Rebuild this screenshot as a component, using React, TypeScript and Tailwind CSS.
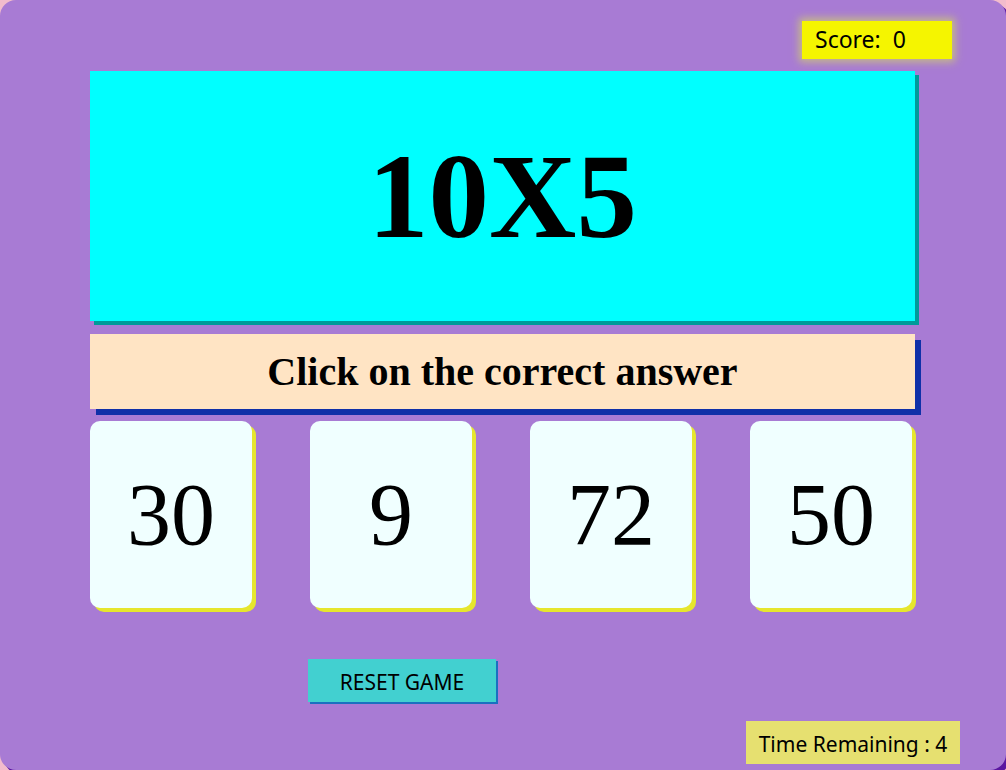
import React from "react";

const answers = ["30", "9", "72", "50"];

const AnswerCard: React.FC<{ value: string }> = ({ value }) => (
  <div className="w-[162px] h-[187px] bg-[#f0ffff] rounded-[10px] shadow-[4px_4px_0_#e6e62e] flex items-center justify-center">
    <span className="text-[88px] leading-none text-black" style={{ fontFamily: '"Liberation Serif", serif' }}>
      {value}
    </span>
  </div>
);

export default function App() {
  return (
    <div className="h-[770px] w-[1006px] bg-[#f2bccc] overflow-hidden">
      <div
        className="h-full w-full bg-[#a87bd4] rounded-[16px] shadow-[4px_4px_0_#5a16a0] flex flex-col"
        style={{ fontFamily: '"Noto Sans", "Open Sans", sans-serif' }}
      >
        {/* score */}
        <div className="flex justify-end pr-[54px] pt-[21px]">
          <div className="w-[150px] h-[38px] bg-[#f5f500] shadow-[0_0_8px_3px_rgba(220,230,80,0.6)] flex items-center pl-[13px] pb-[2px] text-[23px] text-black">
            Score:<span className="ml-[12px]">0</span>
          </div>
        </div>

        <div className="pl-[90px] pr-[91px] flex flex-col">
          {/* question */}
          <div className="mt-[12px] h-[250px] bg-[#00ffff] shadow-[4px_4px_0_#009a9a] flex items-center justify-center">
            <span
              className="text-[121px] font-bold leading-none text-black"
              style={{ fontFamily: '"Liberation Serif", serif' }}
            >
              10X5
            </span>
          </div>

          {/* instruction */}
          <div className="mt-[13px] h-[75px] bg-[#ffe4c4] shadow-[6px_6px_0_#1030a8] flex items-center justify-center">
            <span
              className="text-[40px] font-bold leading-none text-black"
              style={{ fontFamily: '"Liberation Serif", serif' }}
            >
              Click on the correct answer
            </span>
          </div>

          {/* answers */}
          <div className="mt-[12px] flex gap-[58px]">
            {answers.map((a) => (
              <AnswerCard key={a} value={a} />
            ))}
          </div>

          {/* reset */}
          <div className="mt-[51px] pl-[218px]">
            <button className="w-[188px] h-[43px] bg-[#42d0d0] shadow-[2px_2px_0_#1a70c0] text-[21px] leading-none pt-[3px] text-black">
              RESET GAME
            </button>
          </div>
        </div>

        {/* timer */}
        <div className="flex justify-end pr-[46px] mt-[19px]">
          <div className="w-[214px] h-[43px] bg-[#e6e070] flex items-center justify-center pt-[3px] text-[21px] leading-none text-black">
            Time Remaining : 4
          </div>
        </div>
      </div>
    </div>
  );
}
